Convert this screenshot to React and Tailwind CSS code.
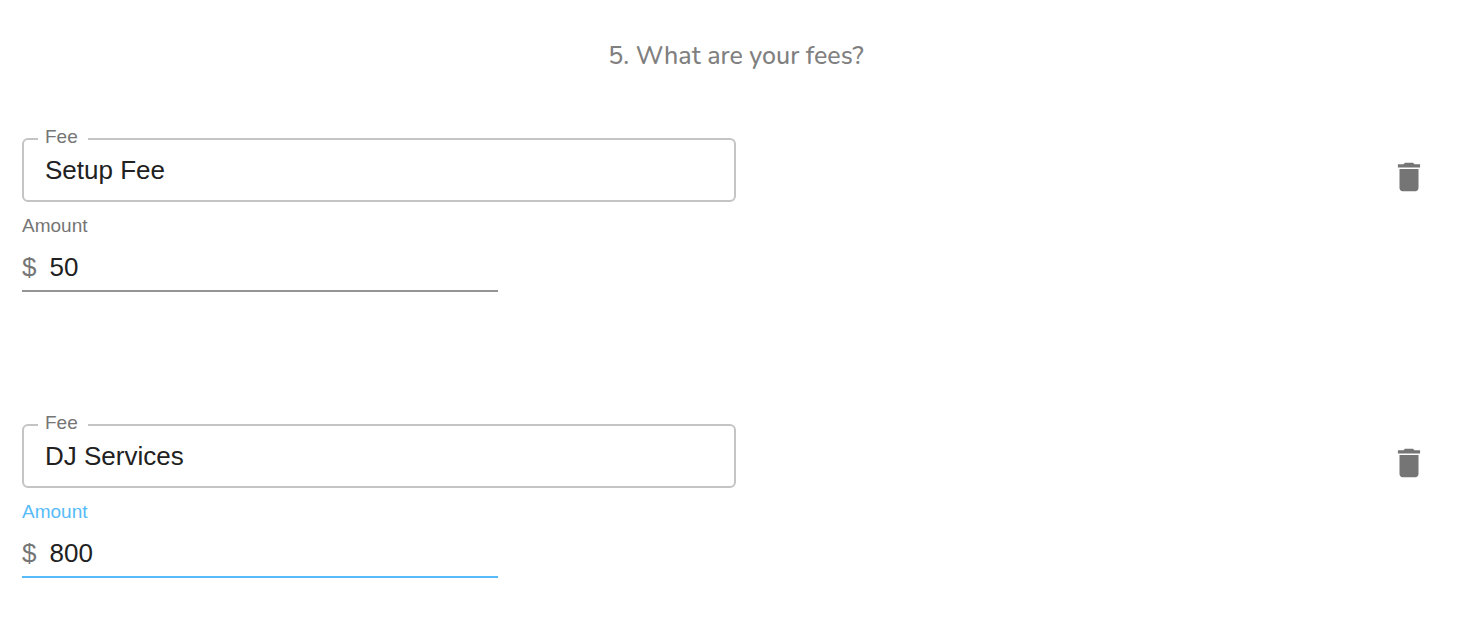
import { useId, useState } from "react";

const initialFees = [
  { id: 1, name: "Setup Fee", amount: "50", active: false },
  { id: 2, name: "DJ Services", amount: "800", active: true },
];

function TrashIcon() {
  return (
    <svg viewBox="0 0 24 24" className="size-[38px] fill-current" aria-hidden="true">
      <path d="M6 19c0 1.1.9 2 2 2h8c1.1 0 2-.9 2-2V7H6v12zM19 4h-3.500l-1-1h-5l-1 1H5v2h14V4z" />
    </svg>
  );
}

function FeeNameField({ value, onChange }) {
  const id = useId();
  return (
    <div className="relative w-1/2">
      <label
        htmlFor={id}
        className="absolute -top-3 left-4 bg-white pr-2.5 pl-[7px] text-[19px] leading-[22px] text-[#757575]"
      >
        Fee
      </label>
      <input
        id={id}
        type="text"
        value={value}
        onChange={onChange}
        className="block h-16 w-full rounded-md border-2 border-[#c4c4c4] bg-transparent px-[21px] text-[26px] text-[#212121] outline-none"
      />
    </div>
  );
}

function AmountField({ value, active, onChange }) {
  const id = useId();
  return (
    <div className="mt-3 w-1/3">
      <label
        htmlFor={id}
        className={`block text-[19px] leading-6 ${active ? "text-[#56bbf8]" : "text-[#757575]"}`}
      >
        Amount
      </label>
      <div
        className={`mt-1.5 flex h-12 items-center gap-[13px] border-b-2 ${
          active ? "border-[#56bbf8]" : "border-[#949494]"
        }`}
      >
        <span className="text-[26px] leading-8 text-[#757575]">$</span>
        <input
          id={id}
          type="text"
          inputMode="decimal"
          value={value}
          onChange={onChange}
          className="min-w-0 flex-1 bg-transparent text-[26px] leading-8 text-[#212121] outline-none"
        />
      </div>
    </div>
  );
}

export default function App() {
  const [fees, setFees] = useState(initialFees);
  const update = (id, key, value) =>
    setFees(fees.map((fee) => (fee.id === id ? { ...fee, [key]: value } : fee)));

  return (
    <main className="bg-white px-[22px] pt-[38px] pb-11 font-['Liberation_Sans',Arial,sans-serif]">
      <h1 className="text-center font-['Nunito','Lato',sans-serif] text-[25px] leading-9 font-medium text-[#808080]">
        5. What are your fees?
      </h1>
      <ul className="mt-16 flex flex-col gap-[132px]">
        {fees.map((fee) => (
          <li key={fee.id}>
            <div className="flex items-start justify-between">
              <FeeNameField
                value={fee.name}
                onChange={(e) => update(fee.id, "name", e.target.value)}
              />
              <button
                type="button"
                aria-label={`Delete ${fee.name}`}
                onClick={() => setFees(fees.filter((f) => f.id !== fee.id))}
                className="mt-5 mr-[22px] text-[#757575]"
              >
                <TrashIcon />
              </button>
            </div>
            <AmountField
              value={fee.amount}
              active={fee.active}
              onChange={(e) => update(fee.id, "amount", e.target.value)}
            />
          </li>
        ))}
      </ul>
    </main>
  );
}
